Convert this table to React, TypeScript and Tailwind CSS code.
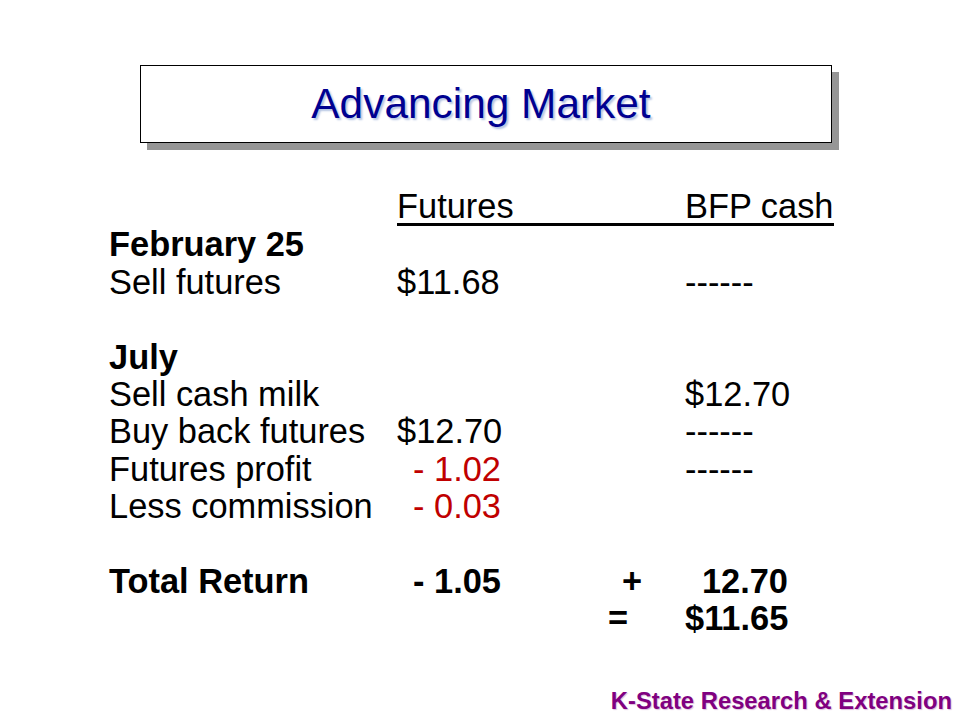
import React from "react";

const F = "font-['Liberation_Sans',Arial,Helvetica,sans-serif]";

type Row = {
  label?: string;
  bold?: boolean;
  c2?: React.ReactNode;
  c3?: React.ReactNode;
  c4?: React.ReactNode;
};

function Line({ label, bold, c2, c3, c4 }: Row) {
  return (
    <div className={`flex h-[37.4px] leading-[37.4px] whitespace-pre ${bold ? "font-bold" : ""}`}>
      <div className="w-[288px]">{label ?? ""}</div>
      <div className="w-[104px]">{c2}</div>
      <div className="w-[184px]">{c3}</div>
      <div className="w-[149px]">{c4}</div>
    </div>
  );
}

export default function App() {
  return (
    <div className={`${F} relative flex h-[720px] w-[960px] flex-col bg-white text-black`}>
      <div className="pl-[140px] pt-[65px]">
        <div className="flex h-[78px] w-[692px] items-center justify-center border border-black bg-white pr-[10px] shadow-[7px_7px_0_#969696]">
          <span className="text-[42.4px] leading-none text-[#000090] [text-shadow:2px_2px_2px_#b4c4e2]">
            Advancing Market
          </span>
        </div>
      </div>

      <div className="mt-[46px] flex flex-col pl-[109px] text-[34.4px]">
        <div className="flex h-[37.4px] leading-[34.4px]">
          <div className="w-[288px]" />
          <div className="flex w-[437px] border-b-[3px] border-black">
            <div className="w-[288px]">Futures</div>
            <div>BFP cash</div>
          </div>
        </div>
        <Line label="February 25" bold />
        <Line label="Sell futures" c2="$11.68" c4="------" />
        <Line />
        <Line label="July" bold />
        <Line label="Sell cash milk" c4="$12.70" />
        <Line label="Buy back futures" c2="$12.70" c4="------" />
        <Line
          label="Futures profit"
          c2={<div className="text-right text-[#c00000]">- 1.02</div>}
          c4="------"
        />
        <Line
          label="Less commission"
          c2={<div className="text-right text-[#c00000]">- 0.03</div>}
        />
        <Line />
        <Line
          label="Total Return"
          bold
          c2={<div className="text-right">- 1.05</div>}
          c3={<div className="pl-[121px]">+</div>}
          c4={<div className="w-[103px] text-right">12.70</div>}
        />
        <Line
          bold
          c3={<div className="pl-[107px]">=</div>}
          c4="$11.65"
        />
      </div>

      <div className="mt-auto flex justify-end pb-[6px] pr-[8px]">
        <span className="text-[23.8px] font-bold leading-[27px] text-[#800080] [text-shadow:1px_1px_1px_#dcc0dc]">
          K-State Research &amp; Extension
        </span>
      </div>
    </div>
  );
}
